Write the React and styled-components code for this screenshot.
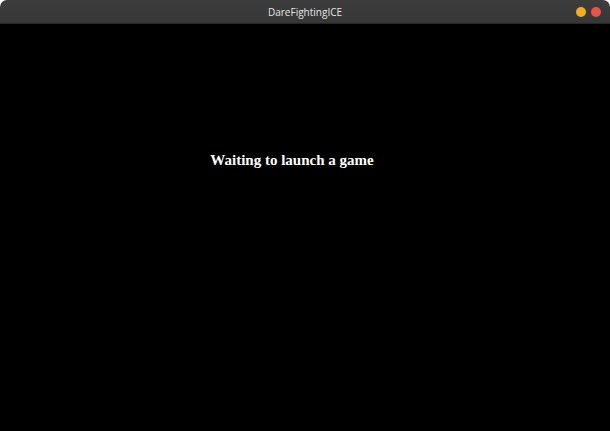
import React from "react";
import styled, { createGlobalStyle } from "styled-components";

const GlobalStyle = createGlobalStyle`
  * { box-sizing: border-box; }
  body { margin: 0; background: #fff; }
`;

const Window = styled.div`
  display: flex;
  flex-direction: column;
  min-height: 100vh;
  background: #000;
`;

const TitleCorners = styled.div`
  background: #fff;
`;

const TitleBar = styled.header`
  display: grid;
  grid-template-columns: 1fr auto 1fr;
  align-items: center;
  height: 24px;
  padding: 0 9px;
  border-bottom: 1px solid #262626;
  border-radius: 7px 7px 0 0;
  background: linear-gradient(#3d3d3d, #373737);
`;

const Title = styled.h1`
  grid-column: 2;
  margin: 0;
  color: #e4e4e4;
  font: 400 10px/22px "Open Sans", "Noto Sans", sans-serif;
`;

const Controls = styled.div`
  display: flex;
  justify-content: flex-end;
  gap: 5px;
`;

const WindowButton = styled.button`
  width: 10px;
  height: 10px;
  padding: 0;
  border: 0;
  border-radius: 50%;
  background: ${({ $color }) => $color};
`;

const Screen = styled.main`
  flex: 1;
  padding: 127px 26px 0 0;
  text-align: center;
`;

const Message = styled.p`
  margin: 0;
  color: #fff;
  font: 700 15px/18px "Liberation Serif", serif;
`;

export default function App() {
  return (
    <>
      <GlobalStyle />
      <Window>
        <TitleCorners>
          <TitleBar>
            <Title>DareFightingICE</Title>
            <Controls>
              <WindowButton type="button" aria-label="Minimize" $color="#f1ad20" />
              <WindowButton type="button" aria-label="Close" $color="#ea534c" />
            </Controls>
          </TitleBar>
        </TitleCorners>
        <Screen>
          <Message>Waiting to launch a game</Message>
        </Screen>
      </Window>
    </>
  );
}
